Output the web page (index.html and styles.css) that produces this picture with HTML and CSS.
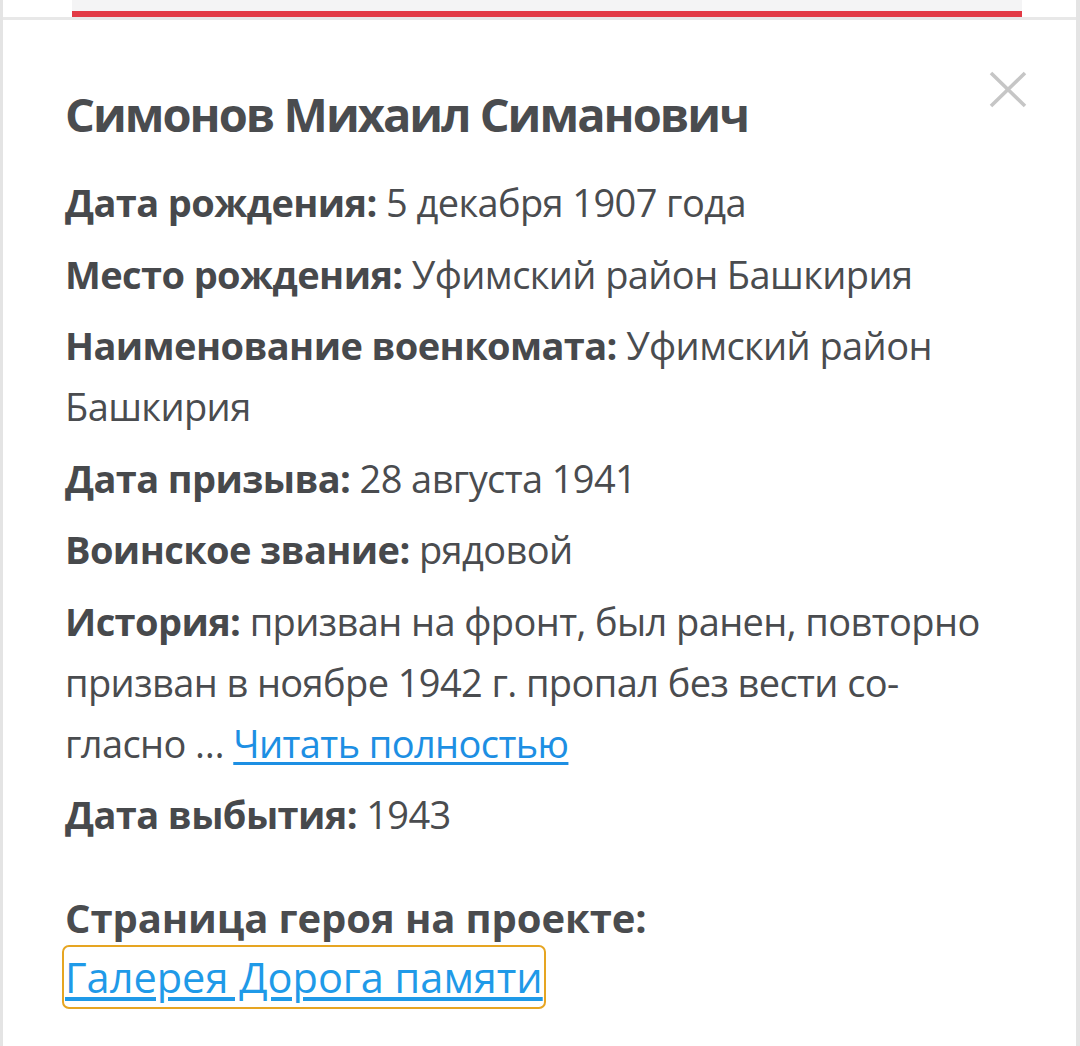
FILE: index.html
```html
<!DOCTYPE html>
<html lang="ru">
<head>
    <meta charset="UTF-8">
    <meta name="viewport" content="width=device-width, initial-scale=1.0">
    <title>Симонов Михаил Симанович</title>
    <link rel="stylesheet" href="styles.css">
</head>
<body>
    <div class="page">
        <div class="top-strip">
            <div class="strip-inner"></div>
        </div>

        <section class="hero-card">
            <button class="close-btn" aria-label="Закрыть">
                <svg width="38" height="37" viewBox="0 0 38 37">
                    <path d="M2 2 L36 35 M36 2 L2 35" stroke="#c6c6c6" stroke-width="3.6" fill="none"/>
                </svg>
            </button>

            <h1 class="hero-name">Симонов Михаил Симанович</h1>

            <div class="info-list">
                <p class="info"><b>Дата рождения:</b> 5 декабря 1907 года</p>
                <p class="info"><b>Место рождения:</b> Уфимский район Башкирия</p>
                <p class="info"><b>Наименование военкомата:</b> Уфимский район Башкирия</p>
                <p class="info"><b>Дата призыва:</b> 28 августа 1941</p>
                <p class="info"><b>Воинское звание:</b> рядовой</p>
                <p class="info"><b>История:</b> призван на фронт, был ранен, повторно призван в ноябре 1942 г. пропал без вести со&shy;гласно … <a href="#" class="more-link">Читать полностью</a></p>
                <p class="info"><b>Дата выбытия:</b> 1943</p>
            </div>

            <h2 class="project-title">Страница героя на проекте:</h2>
            <a href="#" class="gallery-link">Галерея Дорога памяти</a>
        </section>
    </div>
</body>
</html>
```
FILE: styles.css
```css
/* Base */
* {
    margin: 0;
    padding: 0;
    box-sizing: border-box;
}

body {
    font-family: 'Open Sans', 'Noto Sans', sans-serif;
    color: #4a4c4f;
    background: #fff;
}

.page {
    min-height: 1046px;
    border-left: 3px solid #e4e4e4;
    border-right: 4px solid #e4e4e4;
}

/* Top strip with red line */
.top-strip {
    height: 20px;
    border-bottom: 3px solid #e8e8e8;
}

.strip-inner {
    height: 17px;
    margin: 0 54px 0 69px;
    background: #f4f4f5;
    border-bottom: 6px solid #e23a45;
}

/* Card */
.hero-card {
    position: relative;
    padding: 64px 60px 40px 62px;
}

.close-btn {
    position: absolute;
    top: 51px;
    right: 49px;
    border: none;
    background: none;
    line-height: 0;
    cursor: pointer;
}

.hero-name {
    font-size: 47px;
    line-height: 60px;
    font-weight: 700;
    letter-spacing: -2px;
    color: #4a4c4f;
    margin-bottom: 28px;
}

/* Narrower column so the story wraps like the original */
.info-list {
    padding-right: 26px;
}

.info {
    font-size: 38px;
    line-height: 61px;
    letter-spacing: -0.6px;
    margin-bottom: 10.5px;
    hyphens: manual;
}

.info b {
    font-weight: 700;
    color: #47494c;
}

.more-link {
    color: #1d8fe3;
    text-decoration: underline;
    text-decoration-thickness: 3px;
    text-underline-offset: 4px;
}

.project-title {
    font-size: 40px;
    line-height: 61px;
    font-weight: 700;
    letter-spacing: -0.1px;
    margin-top: 42px;
}

.gallery-link {
    display: inline-block;
    font-size: 41.5px;
    line-height: 58px;
    color: #1f9ae8;
    text-decoration: underline;
    text-decoration-thickness: 4px;
    text-underline-offset: 4px;
    outline: 2.5px solid #e6a522;
    outline-offset: 1px;
    border-radius: 4px;
}
```
